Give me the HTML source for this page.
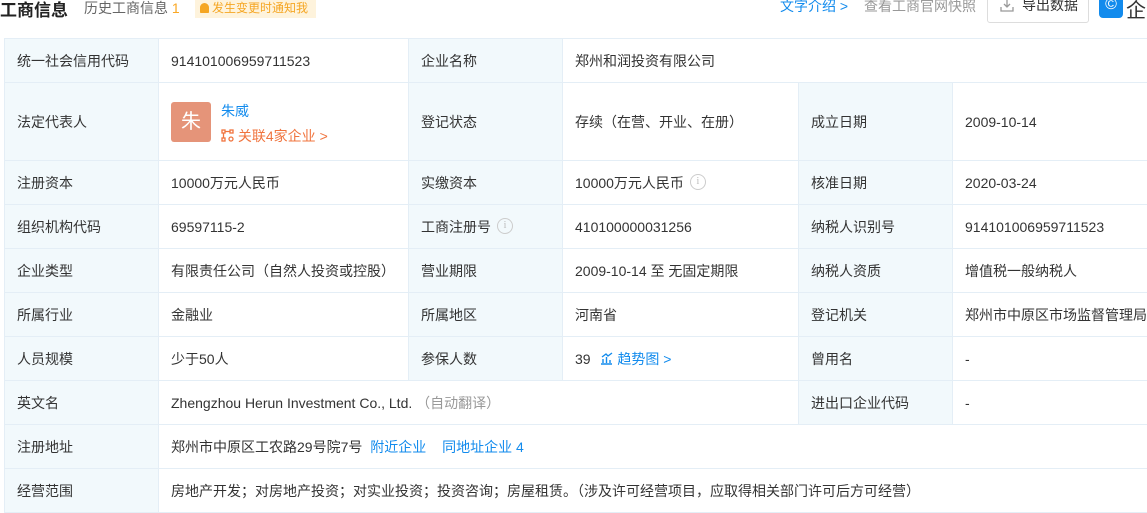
<!DOCTYPE html>
<html><head><meta charset="utf-8"><style>
body{margin:0;width:1147px;height:500px;overflow:hidden;background:#fff;font-family:"Liberation Sans","Noto Sans CJK SC",sans-serif;font-size:14px;color:#333;position:relative}
.a{position:absolute;white-space:nowrap}
table{position:absolute;left:4px;top:38px;border-collapse:collapse;table-layout:fixed;width:1160px}
td{border:1px solid #e4eef6;padding:0 0 0 12px;white-space:nowrap;overflow:hidden}
td.l{background:#f2f9fc;color:#333}
.bl{color:#128bed}
.g{color:#999}
.info{display:inline-block;width:14px;height:14px;border:1px solid #ccc;border-radius:50%;font-size:10px;line-height:14px;text-align:center;color:#bbb;vertical-align:middle;margin-left:6px;margin-top:-3px;font-family:"Liberation Serif",serif}
</style></head><body>
<div class="a" style="left:0;top:-4px;font-size:17px;font-weight:bold;color:#222">工商信息</div>
<div class="a" style="left:84px;top:-2px;font-size:14px;color:#666">历史工商信息 <span style="color:#f9a825">1</span></div>
<div class="a" style="left:195px;top:-2px;height:20px;width:121px;background:#fef3dc;color:#f5a623;font-size:12px;line-height:20px"><span style="display:inline-block;width:9px;height:10px;background:#f5a623;border-radius:5px 5px 1px 1px;margin:0 3px 0 5px;vertical-align:-1px"></span>发生变更时通知我</div>
<div class="a bl" style="left:780px;top:-4px;font-size:14px">文字介绍 &gt;</div>
<div class="a" style="left:864px;top:-4px;font-size:14px;color:#999">查看工商官网快照</div>
<div class="a" style="left:987px;top:-10px;width:100px;height:31px;border:1px solid #ddd;border-radius:3px;font-size:14px;line-height:28px;color:#333"><svg width="14" height="14" viewBox="0 0 14 14" style="margin:0 8px 0 12px;vertical-align:-2px" fill="none" stroke="#999" stroke-width="1.3"><path d="M7 1v8M4 6l3 3 3-3M1 9v4h12V9"/></svg>导出数据</div>
<div class="a" style="left:1099px;top:-6px;width:24px;height:24px;background:#128bed;border-radius:4px;color:#fff;text-align:center;font-size:16px;line-height:22px">©</div>
<div class="a" style="left:1126px;top:-6px;font-size:20px;color:#333">企</div>
<table>
<colgroup><col style="width:154px"><col style="width:250px"><col style="width:154px"><col style="width:236px"><col style="width:154px"><col style="width:212px"></colgroup>
<tr style="height:44px"><td class="l">统一社会信用代码</td><td>914101006959711523</td><td class="l">企业名称</td><td colspan="3">郑州和润投资有限公司</td></tr>
<tr style="height:78px"><td class="l">法定代表人</td><td><div style="position:relative;height:77px"><div style="position:absolute;left:0;top:19px;width:40px;height:40px;background:#e59479;border-radius:3px;color:#fff;font-size:20px;line-height:40px;text-align:center">朱</div><div class="bl" style="position:absolute;left:50px;top:18px">朱威</div><div style="position:absolute;left:50px;top:43px;color:#f0743e"><svg width="13" height="13" viewBox="0 0 13 13" fill="none" stroke="#f0743e" stroke-width="1.3" style="vertical-align:-1px"><rect x="1" y="1" width="3" height="3"/><rect x="9" y="1" width="3" height="3"/><rect x="1" y="9" width="3" height="3"/><circle cx="10" cy="10" r="2"/><path d="M4 2.5h5M2.5 4v5"/></svg> 关联4家企业 &gt;</div></div></td><td class="l">登记状态</td><td>存续（在营、开业、在册）</td><td class="l">成立日期</td><td>2009-10-14</td></tr>
<tr style="height:44px"><td class="l">注册资本</td><td>10000万元人民币</td><td class="l">实缴资本</td><td>10000万元人民币<span class="info">i</span></td><td class="l">核准日期</td><td>2020-03-24</td></tr>
<tr style="height:44px"><td class="l">组织机构代码</td><td>69597115-2</td><td class="l">工商注册号<span class="info">i</span></td><td>410100000031256</td><td class="l">纳税人识别号</td><td>914101006959711523</td></tr>
<tr style="height:44px"><td class="l">企业类型</td><td>有限责任公司（自然人投资或控股）</td><td class="l">营业期限</td><td>2009-10-14 至 无固定期限</td><td class="l">纳税人资质</td><td>增值税一般纳税人</td></tr>
<tr style="height:44px"><td class="l">所属行业</td><td>金融业</td><td class="l">所属地区</td><td>河南省</td><td class="l">登记机关</td><td>郑州市中原区市场监督管理局</td></tr>
<tr style="height:44px"><td class="l">人员规模</td><td>少于50人</td><td class="l">参保人数</td><td>39 <span class="bl" style="margin-left:6px"><svg width="13" height="13" viewBox="0 0 13 13" fill="none" stroke="#128bed" stroke-width="1.4" style="vertical-align:-1px"><path d="M1 12h11M3 11V7M6.5 11V5M10 11V8M2 5l4-3 2 2 4-3"/></svg> 趋势图 &gt;</span></td><td class="l">曾用名</td><td>-</td></tr>
<tr style="height:44px"><td class="l">英文名</td><td colspan="3">Zhengzhou Herun Investment Co., Ltd. <span class="g">（自动翻译）</span></td><td class="l">进出口企业代码</td><td>-</td></tr>
<tr style="height:44px"><td class="l">注册地址</td><td colspan="5">郑州市中原区工农路29号院7号 <span class="bl" style="margin-left:4px">附近企业</span> <span class="bl" style="margin-left:12px">同地址企业 4</span></td></tr>
<tr style="height:44px"><td class="l">经营范围</td><td colspan="5">房地产开发；对房地产投资；对实业投资；投资咨询；房屋租赁。（涉及许可经营项目，应取得相关部门许可后方可经营）</td></tr>
</table>
</body></html>
